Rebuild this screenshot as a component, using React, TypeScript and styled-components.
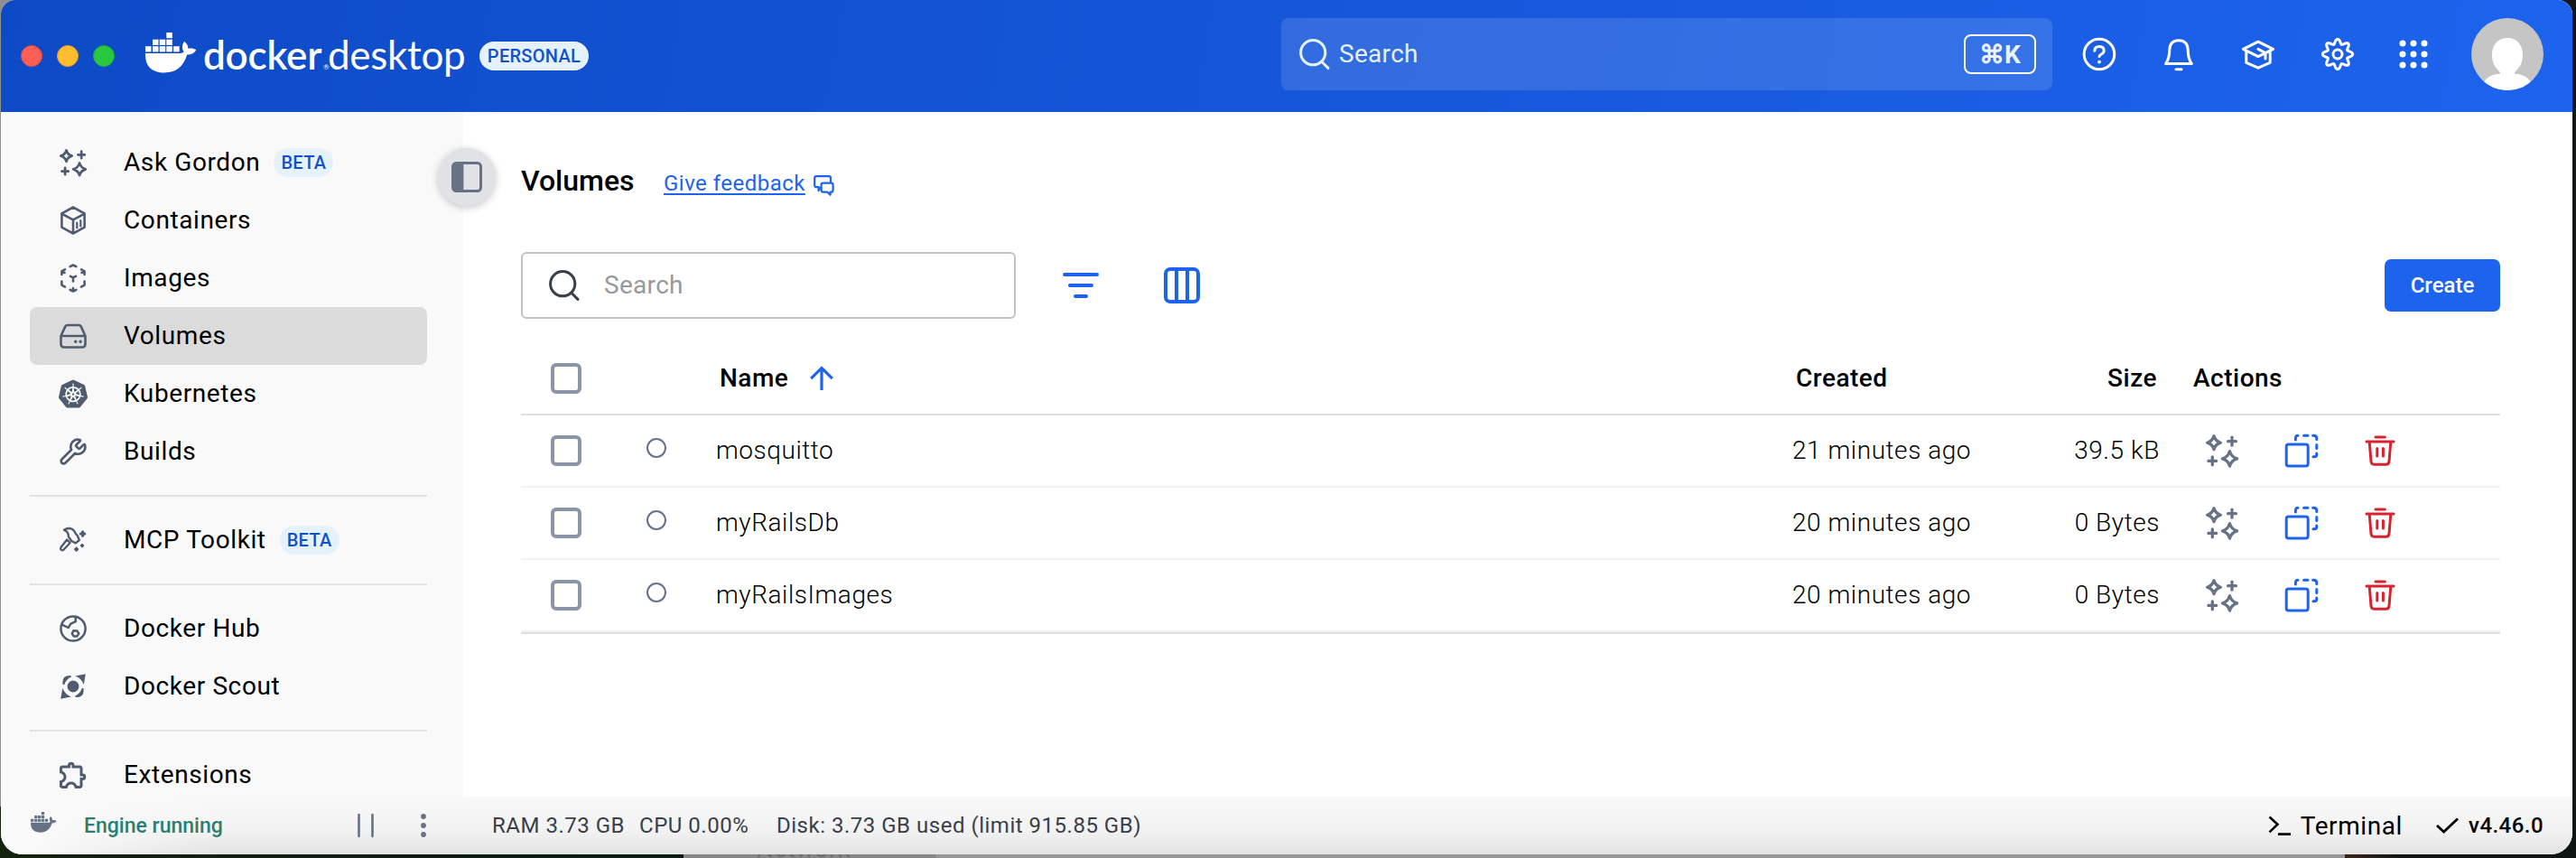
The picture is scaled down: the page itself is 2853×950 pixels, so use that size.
import React from "react";
import styled, { createGlobalStyle } from "styled-components";
import { SiKubernetes } from "react-icons/si";
import { MdOutlineExtension } from "react-icons/md";
import { Wrench } from "lucide-react";

const GlobalStyle = createGlobalStyle`
  * { box-sizing: border-box; }
  body { margin: 0; background: #8b8b8b; font-family: Roboto, "Liberation Sans", sans-serif; }
  svg { display: block; flex: none; overflow: visible; }
`;

const slate = "#505b70";
const muted = "#677285";
const blue = "#1d63ed";
const red = "#d7222f";

const Desktop = styled.div`
  width: 2853px;
  height: 950px;
  overflow: hidden;
  padding-left: 1px;
  background: linear-gradient(90deg, #8f8f8f 0 1400px, #121614 1400px) 0 0 / 100% 893px no-repeat,
    linear-gradient(90deg, #14230f 0, #0b1a12 757px, #868686 757px, #868686 1037px, #979797 1037px, #979797 2597px, #3b2419 2597px, #0e1512 2660px);
`;

const Window = styled.div`
  width: 2848px;
  height: 946px;
  display: flex;
  flex-direction: column;
  overflow: hidden;
  border-radius: 16px 16px 24px 24px;
  background: #fff;
`;

const BehindWindow = styled.div`
  height: 4px;
  overflow: hidden;
  padding-left: 836px;
  color: #6e6e6e;
  font-size: 28px;
  line-height: 28px;
`;

const BehindLabel = styled.div`
  margin-top: -20px;
`;

const Header = styled.header`
  height: 124px;
  flex: none;
  display: flex;
  align-items: center;
  padding: 0 32px 0 22px;
  background: linear-gradient(100deg, #0d4ac6 0%, #1d63ed 100%);
  color: #fff;
`;

const Lights = styled.div`
  display: flex;
  gap: 16px;
  width: 138px;
`;

const Light = styled.span<{ $c: string; $edge: string }>`
  width: 24px;
  height: 24px;
  border-radius: 50%;
  background: ${(p) => p.$c};
  border: 1px solid ${(p) => p.$edge};
`;

const LogoMark = styled.span`
  margin-bottom: 7px;
`;

const Wordmark = styled.div`
  display: flex;
  align-items: baseline;
  margin-left: 7px;
  width: 306px;
  height: 64px;
  line-height: 60px;
  font-family: Lato, sans-serif;
  font-size: 44px;
  white-space: nowrap;
`;

const Strong = styled.span`
  width: 133px;
  font-weight: 600;
  letter-spacing: -0.2px;
`;

const Reg = styled.span`
  width: 5px;
  font-size: 8px;
  letter-spacing: 0;
`;

const Thin = styled.span`
  font-weight: 400;
  letter-spacing: -0.3px;
`;

const Pill = styled.span<{ $w: number }>`
  width: ${(p) => p.$w}px;
  height: 32px;
  border-radius: 16px;
  background: #e5f2fc;
  color: #1150cc;
  font-size: 20px;
  font-weight: 500;
  line-height: 33px;
  text-align: center;
  letter-spacing: 0.3px;
`;

const HeaderSearch = styled.div`
  margin: 0 0 4px auto;
  width: 854px;
  height: 80px;
  border-radius: 8px;
  background: rgba(255, 255, 255, 0.125);
  display: flex;
  align-items: center;
  padding: 0 18px 0 20px;
  color: #e5f2fc;
  font-size: 28px;
  letter-spacing: 0.3px;
`;

const SearchLabel = styled.span<{ $gap: number }>`
  flex: 1;
  margin: -1px 0 0 ${(p) => p.$gap}px;
`;

const Shortcut = styled.span`
  width: 80px;
  height: 44px;
  border: 2px solid #fff;
  border-radius: 8px;
  display: flex;
  align-items: center;
  justify-content: center;
  font-size: 28px;
  font-weight: 700;
  letter-spacing: 0;
  gap: 0;
`;

const HeaderIcons = styled.div`
  display: flex;
  align-items: center;
  gap: 48px;
  margin: 0 48px 4px 32px;
`;

const Avatar = styled.div`
  width: 80px;
  height: 80px;
  margin-bottom: 4px;
  border-radius: 50%;
  overflow: hidden;
  background: #c5c5c5;
`;

const Body = styled.div`
  height: 758px;
  flex: none;
  display: flex;
`;

const Sidebar = styled.nav`
  width: 512px;
  flex: none;
  padding: 24px 40px 0 32px;
  background: #f9f9f9;
  overflow: hidden;
`;

const NavItem = styled.div<{ $active?: boolean }>`
  height: 64px;
  display: flex;
  align-items: center;
  padding-left: 30px;
  border-radius: 8px;
  background: ${(p) => (p.$active ? "#dbdbdb" : "transparent")};
  color: #000;
  font-size: 28px;
  letter-spacing: 0.6px;
`;

const NavIcon = styled.span`
  width: 36px;
  height: 36px;
  margin-right: 38px;
  display: flex;
  align-items: center;
  justify-content: center;
  color: ${slate};
`;

const NavLabel = styled.span`
  margin: 0 15px 2px 0;
`;

const Divider = styled.hr`
  height: 2px;
  margin: 16px 0;
  border: 0;
  background: #e3e3e3;
`;

const Main = styled.main`
  position: relative;
  flex: 1;
  padding: 0 80px 0 64px;
`;

const Collapse = styled.button`
  position: absolute;
  left: -28px;
  top: 40px;
  width: 64px;
  height: 64px;
  padding: 0;
  border: 0;
  border-radius: 50%;
  background: #e1e2e6;
  box-shadow: 0 2px 8px rgba(0, 0, 0, 0.22);
  display: flex;
  align-items: center;
  justify-content: center;
`;

const TitleRow = styled.div`
  height: 155px;
  padding-top: 57px;
  display: flex;
  align-items: baseline;
`;

const Title = styled.h1`
  margin: 0;
  font-size: 32px;
  line-height: 38px;
  font-weight: 500;
  width: 158px;
`;

const Feedback = styled.a`
  color: ${blue};
  font-size: 24px;
  letter-spacing: 0.48px;
  text-decoration: underline;
  text-decoration-thickness: 2px;
  text-underline-offset: 3px;
  margin-right: 9px;
`;

const FeedbackIcon = styled.span`
  align-self: flex-start;
  margin-top: 13px;
`;

const Toolbar = styled.div`
  display: flex;
  align-items: center;
  height: 74px;
`;

const SearchBox = styled.div`
  width: 548px;
  height: 74px;
  margin-right: 52px;
  border: 2px solid #c2c2c2;
  border-radius: 6px;
  display: flex;
  align-items: center;
  padding-left: 29px;
  color: #999;
  font-size: 28px;
  letter-spacing: 0.3px;
`;

const Create = styled.button`
  margin-left: auto;
  width: 128px;
  height: 58px;
  padding: 0;
  border: 0;
  border-radius: 7px;
  background: ${blue};
  color: #fff;
  font: 500 24px Roboto, sans-serif;
`;

const Table = styled.div`
  margin-top: 26px;
  border-bottom: 2px solid #dfdfdf;
`;

const Row = styled.div<{ $head?: boolean }>`
  display: grid;
  grid-template-columns: 139px 78px 1191px 205px 202px 1fr;
  align-items: center;
  height: ${(p) => (p.$head ? 81 : 80)}px;
  border-bottom: 2px solid ${(p) => (p.$head ? "#dfdfdf" : "#f2f2f2")};
  font-size: 28px;
  font-weight: ${(p) => (p.$head ? 500 : 300)};
  letter-spacing: ${(p) => (p.$head ? 0.5 : 0.54)}px;
`;

const Check = styled.span`
  width: 34px;
  height: 34px;
  margin-left: 33px;
  border: 4px solid #8b95a8;
  border-radius: 6px;
`;

const Status = styled.span`
  width: 22px;
  height: 22px;
  margin-top: -6px;
  border: 2px solid ${muted};
  border-radius: 50%;
`;

const NameHead = styled.span`
  display: flex;
  align-items: center;
  gap: 24px;
  padding-left: 3px;
`;

const Cell = styled.span<{ $pad?: number; $right?: number }>`
  margin-top: -2px;
  padding-left: ${(p) => p.$pad ?? 0}px;
  padding-right: ${(p) => p.$right ?? 0}px;
  text-align: ${(p) => (p.$right !== undefined ? "right" : "left")};
`;

const HeadCell = styled(Cell)`
  margin-top: 0;
`;

const NameCell = styled(Cell)`
  margin-left: -1px;
`;

const Actions = styled.span`
  display: flex;
  align-items: center;
  padding-left: 51px;
  gap: 51px;
  color: ${muted};
`;

const Footer = styled.footer`
  height: 64px;
  display: flex;
  align-items: center;
  padding: 0 32px 0 33px;
  background: radial-gradient(circle at 0 40%, #fafafa 40px, rgba(250, 250, 250, 0) 240px),
    linear-gradient(#f9f9f9, #f2f2f2 60%, #e2e2e2);
  font-size: 24px;
  color: #393f49;
`;

const StatusMark = styled.span`
  margin-bottom: 8px;
`;

const Engine = styled.span`
  width: 303px;
  margin-left: 30px;
  color: #2a7e72;
  font-size: 23px;
  font-weight: 500;
`;

const Stat = styled.span<{ $w: number }>`
  width: ${(p) => p.$w}px;
  white-space: nowrap;
  letter-spacing: 0.51px;
`;

const Terminal = styled.span`
  margin: 0 37px 0 11px;
  color: #000;
  font-size: 28px;
  letter-spacing: 0.6px;
`;

const Version = styled.span`
  margin-left: 11px;
  color: #000;
  font-weight: 500;
  letter-spacing: 0.45px;
`;

const Spacer = styled.span`
  flex: 1;
`;

const Whale = ({ w, color }: { w: number; color: string }) => (
  <svg width={w} height={(w * 45) / 57} viewBox="0 0 57 45" fill={color}>
    {[0, 8, 15.7, 23.3, 31.2].map((x) => (
      <rect key={x} x={x} y={15.2} width={6.5} height={6.2} />
    ))}
    {[8, 15.7, 23.3].map((x) => (
      <rect key={x} x={x} y={7.7} width={6.5} height={6.2} />
    ))}
    <rect x={23.3} y={0} width={6.5} height={6.2} />
    <path d="M0 23H38C41 23 42 22 42.6 21C40.2 18 40.5 13.5 43 10C46 12 47.3 14.5 47.4 17.8C50.5 17 53.8 17.6 56.3 19.3C54.5 23 50.5 24.8 46.3 24.6C42 38 34 44.5 21 44.5C8 44.5-.5 38 0 23Z" />
  </svg>
);

const Magnifier = ({ size, color }: { size: number; color: string }) => (
  <svg width={size} height={size} viewBox="0 0 34 34" fill="none" stroke={color} strokeWidth={3} strokeLinecap="round">
    <circle cx={15.2} cy={15.2} r={13.6} />
    <path d="M25 25.5L32 32.4" />
  </svg>
);

const Sparkles = ({ size }: { size: number }) => (
  <svg width={size} height={size} viewBox="0 0 36 36" fill="none" stroke="currentColor" strokeWidth={3.3} strokeLinecap="round" strokeLinejoin="round">
    <path d="M9 1.8C10.2 6 12 7.8 16.4 9.2C12 10.4 10.2 12.4 9 16.6C7.8 12.4 6 10.4 1.6 9.2C6 7.8 7.8 6 9 1.8Z" />
    <path d="M26.5 18.6C27.8 23.4 30 25.4 34.6 26.8C30 28.2 27.8 30.2 26.5 35C25.2 30.2 23 28.2 18.4 26.8C23 25.4 25.2 23.4 26.5 18.6Z" />
    <path d="M29 3.2V12.2M24.6 7.7H33.4M7.3 25V33.8M2.9 29.4H11.7" />
  </svg>
);

const line = { fill: "none", stroke: "currentColor", strokeWidth: 2.6, strokeLinecap: "round", strokeLinejoin: "round" } as const;

const ContainerIcon = () => (
  <svg width={36} height={36} viewBox="0 0 36 36" {...line}>
    <path d="M18 3.5L30.6 10.4V25.6L18 32.5L5.4 25.6V10.4ZM5.8 10.8L18 17.4L30.2 10.8M18 17.4V32" />
    <path d="M22.3 20.5V26.5M26.3 18.2V24.4" strokeWidth={2.2} />
  </svg>
);

const ImageIcon = () => (
  <svg width={36} height={36} viewBox="0 0 36 36" {...line}>
    <path d="M14.6 5.2L18 3.5L21.4 5.2M27 8.4L30.6 10.4V14M30.6 21.5V25.6L27 27.6M21.4 30.8L18 32.5L14.6 30.8M9 27.6L5.4 25.6V21.5M5.4 14V10.4L9 8.4M15 15.8L18 17.4L21 15.8M18 17.4V21.4M18 29V32M6 11L8.5 12M30 11L27.5 12" />
  </svg>
);

const VolumeIcon = () => (
  <svg width={36} height={36} viewBox="0 0 36 36" {...line}>
    <path d="M4.5 18L9.2 7.6Q10 6 12 6H24Q26 6 26.8 7.6L31.5 18V27Q31.5 30.5 28 30.5H8Q4.5 30.5 4.5 27ZM4.5 18H31.5" />
    <path d="M20.7 24.2H20.8M26 24.2H26.1" strokeWidth={3.4} />
  </svg>
);

const McpIcon = () => (
  <svg width={36} height={36} viewBox="0 0 36 36" {...line} strokeWidth={2.4}>
    <path d="M8 6.8C12 4 17 4.5 19.4 8.2C20.2 10 20.6 11.4 22.6 12.8L24.8 18L20.8 21.4L16.2 19L13 14.4C13 10.4 11 7.8 8 6.8Z" />
    <path d="M11.2 17.6L14.6 21L7.4 28.8Q5.6 30 4.4 28.4Q3.6 27 4.8 25.4Z" />
    <path d="M28.6 8.8V13.2M26.4 11H30.8" strokeWidth={3.2} />
    <path d="M28 23.3V25M27.2 24.1H28.8M21.6 27V29.4M20.4 28.2H22.8" strokeWidth={2.8} />
  </svg>
);

const HubIcon = () => (
  <svg width={36} height={36} viewBox="0 0 36 36" {...line} strokeWidth={2.5}>
    <circle cx={18} cy={18} r={13.6} />
    <path d="M5.6 13.6L12.6 17L15.4 12.6L20.8 10.2L20.6 5" />
    <path d="M18.4 20.2L22.4 20.6L24.4 23.4L22.4 26.4H18.6L16.8 23.6Z" />
  </svg>
);

const ScoutIcon = () => (
  <svg width={36} height={36} viewBox="0 0 36 36" fill="currentColor">
    <circle cx={18} cy={18} r={6.4} />
    <path d="M31.8 4.2L29.8 16Q26.6 8.6 20.2 6.6ZM4.2 31.8L6.2 20Q9.4 27.4 15.8 29.4ZM6.6 16Q5 5.6 15 6L16.2 7.2Q10.4 9.6 8.2 16ZM29.4 20Q31 30.4 21 30L19.8 28.8Q25.6 26.4 27.8 20Z" />
  </svg>
);

const gearPath =
  Array.from({ length: 97 }, (_, i) => {
    const t = (i / 96) * Math.PI * 2;
    const r = 14.1 + 2.6 * Math.cos(8 * t);
    return `${i ? "L" : "M"}${(20 + r * Math.sin(t)).toFixed(2)} ${(20 - r * Math.cos(t)).toFixed(2)}`;
  }).join("") + "Z";

const head = { ...line, strokeWidth: 3, width: 40, height: 40, viewBox: "0 0 40 40" };

const DuplicateIcon = () => (
  <svg width={38} height={38} viewBox="0 0 38 38" {...line} stroke={blue} strokeWidth={3}>
    <rect x={2.2} y={12} width={24} height={24} rx={2.5} />
    <path d="M12.4 7V5.4Q12.4 2.2 15 2.2M21.6 2.2H26M31.6 2.2H32.6Q35.8 2.2 35.8 5.4V6.4M35.8 12.4V16.4M35.8 22V23Q35.8 25.8 33 25.8H32" />
  </svg>
);

const TrashIcon = () => (
  <svg width={34} height={34} viewBox="0 0 34 34" {...line} strokeWidth={3} stroke={red}>
    <path d="M12 2H22.4M2 7H32M5.2 7L7 29Q7.3 32.2 10.4 32.2H23.6Q26.7 32.2 27 29L28.8 7M13.8 14.4V23M20.4 14.4V23" />
  </svg>
);

const Beta = () => <Pill $w={66}>BETA</Pill>;

const nav: { label: string; icon: React.ReactNode; beta?: boolean; active?: boolean }[][] = [
  [
    { label: "Ask Gordon", icon: <Sparkles size={30} />, beta: true },
    { label: "Containers", icon: <ContainerIcon /> },
    { label: "Images", icon: <ImageIcon /> },
    { label: "Volumes", icon: <VolumeIcon />, active: true },
    { label: "Kubernetes", icon: <SiKubernetes size={32} /> },
    { label: "Builds", icon: <Wrench size={32} strokeWidth={2} /> },
  ],
  [{ label: "MCP Toolkit", icon: <McpIcon />, beta: true }],
  [
    { label: "Docker Hub", icon: <HubIcon /> },
    { label: "Docker Scout", icon: <ScoutIcon /> },
  ],
  [{ label: "Extensions", icon: <MdOutlineExtension size={36} /> }],
];

const volumes = [
  { name: "mosquitto", created: "21 minutes ago", size: "39.5 kB" },
  { name: "myRailsDb", created: "20 minutes ago", size: "0 Bytes" },
  { name: "myRailsImages", created: "20 minutes ago", size: "0 Bytes" },
];

export default function App() {
  return (
    <Desktop>
      <GlobalStyle />
      <Window>
        <Header>
          <Lights>
            <Light $c="#ff5f57" $edge="#e24b41" />
            <Light $c="#febc2e" $edge="#e0a028" />
            <Light $c="#28c840" $edge="#1eae32" />
          </Lights>
          <LogoMark>
            <Whale w={57} color="#fff" />
          </LogoMark>
          <Wordmark>
            <Strong>docker</Strong>
            <Reg>®</Reg>
            <Thin>desktop</Thin>
          </Wordmark>
          <Pill $w={121}>PERSONAL</Pill>
          <HeaderSearch>
            <Magnifier size={34} color="#e5f2fc" />
            <SearchLabel $gap={10}>Search</SearchLabel>
            <Shortcut>
              <span>⌘</span>
              <span>K</span>
            </Shortcut>
          </HeaderSearch>
          <HeaderIcons>
            <svg {...head}>
              <circle cx={20} cy={20} r={16.8} />
              <path d="M14.8 16.2Q15 11.4 20 11.4Q25.2 11.4 25.2 16Q25.2 18.6 22.4 20Q20 21.2 20 22.4" />
              <path d="M20 28.6H20.1" strokeWidth={3.8} />
            </svg>
            <svg {...head}>
              <path d="M5.6 30.6Q9.8 25 9.8 15Q10.4 4.8 20 4.8Q29.6 4.8 30.2 15Q30.2 25 34.4 30.6Z" />
              <path d="M17 36.8H23" />
            </svg>
            <svg {...head}>
              <path d="M3.4 14.4L20 6.2L36.6 14.4L20 22.6ZM6.8 17V29.4L20 35.2L33.2 29.4V17" />
              <path d="M20 14.4L28 18.6V25" />
            </svg>
            <svg {...head}>
              <path d={gearPath} />
              <circle cx={20} cy={20} r={5} />
            </svg>
            <svg width={32} height={32} viewBox="0 0 32 32" fill="#fff">
              {[4, 16, 28].map((y) => [4, 16, 28].map((x) => <circle key={x + "-" + y} cx={x} cy={y} r={3.5} />))}
            </svg>
          </HeaderIcons>
          <Avatar>
            <svg width={80} height={80} viewBox="0 0 80 80" fill="#fff">
              <path d="M40 22C51 22 57 30 57 41C57 50 53 55 49 59C47 61 48 62 51 62C59 63 64 67 67 72V80H13V72C16 67 21 63 29 62C32 62 33 61 31 59C27 55 23 50 23 41C23 30 29 22 40 22Z" />
            </svg>
          </Avatar>
        </Header>
        <Body>
          <Sidebar>
            {nav.map((group, g) => (
              <React.Fragment key={g}>
                {g > 0 && <Divider />}
                {group.map((n) => (
                  <NavItem key={n.label} $active={n.active}>
                    <NavIcon>{n.icon}</NavIcon>
                    <NavLabel>{n.label}</NavLabel>
                    {n.beta && <Beta />}
                  </NavItem>
                ))}
              </React.Fragment>
            ))}
          </Sidebar>
          <Main>
            <Collapse aria-label="Collapse sidebar">
              <svg width={34} height={34} viewBox="0 0 34 34" fill="none" stroke={muted} strokeWidth={3}>
                <rect x={1.5} y={1.5} width={31} height={31} rx={4} />
                <path d="M3 3H13.4V31H3Z" fill={muted} stroke="none" />
              </svg>
            </Collapse>
            <TitleRow>
              <Title>Volumes</Title>
              <Feedback>Give feedback</Feedback>
              <FeedbackIcon>
                <svg width={23} height={23} viewBox="0 0 23 23" fill="none" stroke={blue} strokeWidth={2.2} strokeLinejoin="round">
                  <path d="M8 13.2L5.6 17V13.2H3.2Q1.2 13.2 1.2 11.2V3.2Q1.2 1.2 3.2 1.2H17Q19 1.2 19 3.2V8.4" />
                  <path d="M10.6 8.6H19.4Q21.6 8.6 21.6 10.6V16.6Q21.6 18.6 19.6 18.6H18.6V21.8L15.2 18.6H10.6Q8.6 18.6 8.6 16.6V10.6Q8.6 8.6 10.6 8.6Z" />
                </svg>
              </FeedbackIcon>
            </TitleRow>
            <Toolbar>
              <SearchBox>
                <Magnifier size={34} color="#393f49" />
                <SearchLabel $gap={27}>Search</SearchLabel>
              </SearchBox>
              <svg width={40} height={40} viewBox="0 0 40 40" fill="none" stroke={blue} strokeWidth={4} strokeLinecap="round">
                <path d="M2 8H38M8 20H32M14 32H26" />
              </svg>
              <svg width={112} height={40} viewBox="-72 0 112 40" fill="none" stroke={blue} strokeWidth={4}>
                <rect x={2} y={2} width={36} height={36} rx={5} />
                <path d="M14 2V38M26 2V38" />
              </svg>
              <Create>Create</Create>
            </Toolbar>
            <Table>
              <Row $head>
                <Check />
                <span />
                <NameHead>
                  Name
                  <svg width={26} height={27} viewBox="0 0 26 27" fill="none" stroke={blue} strokeWidth={3.2}>
                    <path d="M13 27V2.4M1.2 14.2L13 2.4L24.8 14.2" />
                  </svg>
                </NameHead>
                <HeadCell $pad={4}>Created</HeadCell>
                <HeadCell $right={3}>Size</HeadCell>
                <HeadCell $pad={37}>Actions</HeadCell>
              </Row>
              {volumes.map((v) => (
                <Row key={v.name}>
                  <Check />
                  <Status />
                  <NameCell>{v.name}</NameCell>
                  <Cell>{v.created}</Cell>
                  <Cell $right={0}>{v.size}</Cell>
                  <Actions>
                    <Sparkles size={36} />
                    <DuplicateIcon />
                    <TrashIcon />
                  </Actions>
                </Row>
              ))}
            </Table>
          </Main>
        </Body>
        <Footer>
          <StatusMark>
            <Whale w={29} color={muted} />
          </StatusMark>
          <Engine>Engine running</Engine>
          <svg width={18} height={26} viewBox="0 0 18 26" stroke={muted} strokeWidth={2.6} strokeLinecap="round">
            <path d="M1.5 1V25M16.5 1V25" />
          </svg>
          <svg width={131} height={26} viewBox="-52 0 131 26" fill={muted}>
            <circle cx={3} cy={3} r={2.9} />
            <circle cx={3} cy={13} r={2.9} />
            <circle cx={3} cy={23} r={2.9} />
          </svg>
          <Stat $w={163}>RAM 3.73 GB</Stat>
          <Stat $w={152}>CPU 0.00%</Stat>
          <Stat $w={410}>Disk: 3.73 GB used (limit 915.85 GB)</Stat>
          <Spacer />
          <svg width={25} height={22} viewBox="0 0 25 22" fill="none" stroke="#000" strokeWidth={2.6}>
            <path d="M1.5 1.5L10.5 9.8L1.5 18.4M11 20.6H25" />
          </svg>
          <Terminal>Terminal</Terminal>
          <svg width={25} height={18} viewBox="0 0 25 18" fill="none" stroke="#000" strokeWidth={2.8}>
            <path d="M1 9L8.6 16L24 1.4" />
          </svg>
          <Version>v4.46.0</Version>
        </Footer>
      </Window>
      <BehindWindow>
        <BehindLabel>Network</BehindLabel>
      </BehindWindow>
    </Desktop>
  );
}
